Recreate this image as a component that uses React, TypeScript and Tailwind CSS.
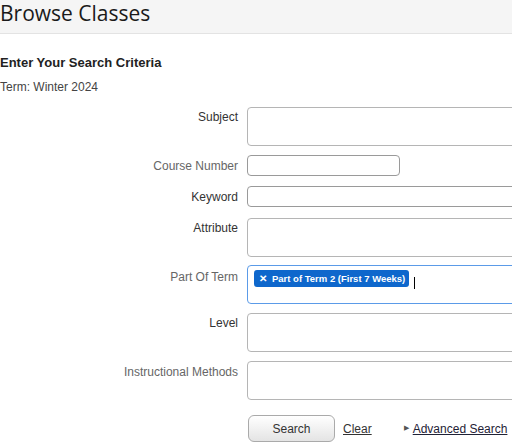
import { useState } from "react"

type Row = {
  label: string
  kind: "tall" | "short" | "wide"
  dim?: boolean
  pad: string
  gap: string
}

const rows: Row[] = [
  { label: "Subject", kind: "tall", pad: "pt-[3px]", gap: "mt-0" },
  { label: "Course Number", kind: "short", dim: true, pad: "", gap: "mt-[9px]" },
  { label: "Keyword", kind: "wide", pad: "", gap: "mt-[10px]" },
  { label: "Attribute", kind: "tall", pad: "pt-[3px]", gap: "mt-[11px]" },
  { label: "Part Of Term", kind: "tall", dim: true, pad: "pt-[5px]", gap: "mt-[8px]" },
  { label: "Level", kind: "tall", pad: "pt-[3px]", gap: "mt-[9px]" },
  { label: "Instructional Methods", kind: "tall", dim: true, pad: "pt-[4px]", gap: "mt-[9px]" },
]

function TermChip({ onRemove }: { onRemove: () => void }) {
  return (
    <span className="inline-flex items-center h-[17px] mt-[4px] ml-[6px] pl-[5px] pr-[4px] gap-[5px] rounded-[3px] bg-[#0e67cc] text-white text-[9.5px] font-bold leading-none">
      <button type="button" onClick={onRemove} className="text-[10px] leading-none">
        ✕
      </button>
      Part of Term 2 (First 7 Weeks)
    </span>
  )
}

export default function App() {
  const [chip, setChip] = useState(true)

  return (
    <div className="w-[512px] h-[446px] overflow-hidden bg-white font-['Liberation_Sans',Arial,sans-serif] text-[12px] text-[#333]">
      <div className="h-[34px] bg-[#f5f5f5] border-b border-[#e3e3e3]">
        <h1 className="font-['Open_Sans',sans-serif] text-[21px] leading-[26px] text-[#1a1a1a]">
          Browse Classes
        </h1>
      </div>

      <h2 className="mt-[21px] text-[13px] leading-[16px] font-bold text-[#222]">
        Enter Your Search Criteria
      </h2>
      <p className="mt-[8px] leading-[16px] text-[#444]">Term: Winter 2024</p>

      <form className="mt-[12px]" onSubmit={e => e.preventDefault()}>
        {rows.map(row => (
          <div
            key={row.label}
            className={`flex ${row.kind === "tall" ? "items-start" : "items-center"} ${row.gap}`}
          >
            <label
              className={`w-[238px] shrink-0 text-right leading-[14px] ${row.pad} ${
                row.dim ? "text-[#666]" : "text-[#333]"
              }`}
            >
              {row.label}
            </label>
            {row.kind === "tall" && (
              <div
                className={`ml-[9px] w-[300px] h-[39px] shrink-0 rounded-[4px] border bg-white ${
                  row.label === "Part Of Term" ? "border-[#5b9be8]" : "border-[#b5b5b5]"
                }`}
              >
                {row.label === "Part Of Term" && chip && (
                  <div className="flex items-start">
                    <TermChip onRemove={() => setChip(false)} />
                    <span className="ml-[5px] mt-[11px] w-px h-[12px] bg-black" />
                  </div>
                )}
              </div>
            )}
            {row.kind === "short" && (
              <input className="ml-[9px] w-[153px] h-[21px] shrink-0 rounded-[4px] border border-[#9a9a9a] bg-white outline-none px-1" />
            )}
            {row.kind === "wide" && (
              <input className="ml-[9px] w-[300px] h-[21px] shrink-0 rounded-[4px] border border-[#9a9a9a] bg-white outline-none px-1" />
            )}
          </div>
        ))}

        <div className="flex items-center mt-[15px] ml-[248px]">
          <button
            type="submit"
            className="w-[87px] h-[27px] rounded-[6px] border border-[#aaa] bg-gradient-to-b from-white to-[#e4e4e4] text-[12px] text-[#333]"
          >
            Search
          </button>
          <a href="#" className="ml-[8px] underline text-[#333]">
            Clear
          </a>
          <span className="ml-[32px] text-[7px] text-[#555]">▶</span>
          <a href="#" className="ml-[4px] underline text-[#1f2236]">
            Advanced Search
          </a>
        </div>
      </form>
    </div>
  )
}
